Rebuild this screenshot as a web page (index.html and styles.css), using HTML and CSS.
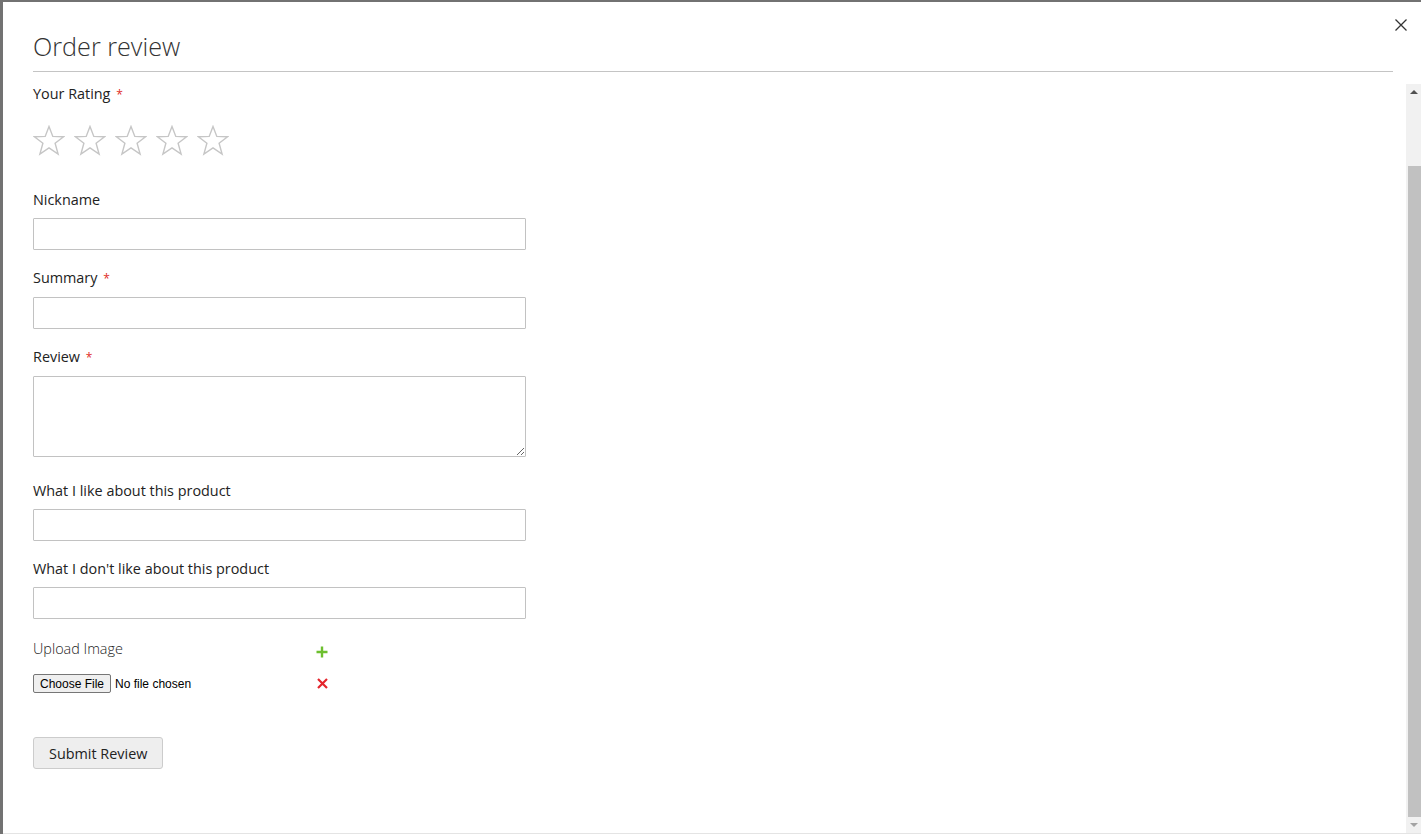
FILE: index.html
```html
<!DOCTYPE html>
<html lang="en">
<head>
    <meta charset="UTF-8">
    <meta name="viewport" content="width=device-width, initial-scale=1.0">
    <title>Order review</title>
    <link rel="stylesheet" href="styles.css">
</head>
<body>

    <div class="modal">

        <button class="close" type="button" aria-label="Close">
            <svg width="12" height="12" viewBox="0 0 12 12">
                <path d="M0.5 0.5 L11.5 11.5 M11.5 0.5 L0.5 11.5" stroke="#333" stroke-width="1.3" fill="none"/>
            </svg>
        </button>

        <div class="header">
            <h1>Order review</h1>
        </div>

        <div class="body">
            <form class="content">

                <div class="rating">
                    <label class="label">Your Rating <span class="req">*</span></label>
                    <div class="stars">
                        <svg class="star" width="32" height="31" viewBox="0 0 32 31"><polygon points="16,1.5 19.8,11.4 30.6,11.7 22.1,18.3 25.1,29 16,22.8 6.9,29 9.9,18.3 1.4,11.7 12.2,11.4"/></svg>
                        <svg class="star" width="32" height="31" viewBox="0 0 32 31"><polygon points="16,1.5 19.8,11.4 30.6,11.7 22.1,18.3 25.1,29 16,22.8 6.9,29 9.9,18.3 1.4,11.7 12.2,11.4"/></svg>
                        <svg class="star" width="32" height="31" viewBox="0 0 32 31"><polygon points="16,1.5 19.8,11.4 30.6,11.7 22.1,18.3 25.1,29 16,22.8 6.9,29 9.9,18.3 1.4,11.7 12.2,11.4"/></svg>
                        <svg class="star" width="32" height="31" viewBox="0 0 32 31"><polygon points="16,1.5 19.8,11.4 30.6,11.7 22.1,18.3 25.1,29 16,22.8 6.9,29 9.9,18.3 1.4,11.7 12.2,11.4"/></svg>
                        <svg class="star" width="32" height="31" viewBox="0 0 32 31"><polygon points="16,1.5 19.8,11.4 30.6,11.7 22.1,18.3 25.1,29 16,22.8 6.9,29 9.9,18.3 1.4,11.7 12.2,11.4"/></svg>
                    </div>
                </div>

                <div class="field">
                    <label class="label" for="nickname">Nickname</label>
                    <input class="inputfield" type="text" id="nickname">
                </div>

                <div class="field">
                    <label class="label" for="summary">Summary <span class="req">*</span></label>
                    <input class="inputfield" type="text" id="summary">
                </div>

                <div class="field field-review">
                    <label class="label" for="review">Review <span class="req">*</span></label>
                    <textarea class="inputfield textarea" id="review"></textarea>
                </div>

                <div class="field">
                    <label class="label" for="like">What I like about this product</label>
                    <input class="inputfield" type="text" id="like">
                </div>

                <div class="field">
                    <label class="label" for="dislike">What I don't like about this product</label>
                    <input class="inputfield" type="text" id="dislike">
                </div>

                <div class="upload">
                    <span class="upload-label">Upload Image</span>
                    <span class="icon-add">
                        <svg width="12" height="12" viewBox="0 0 12 12"><path d="M6 0.5 V11.5 M0.5 6 H11.5" stroke="#6dbf2f" stroke-width="2.4" fill="none"/></svg>
                    </span>
                    <input class="file" type="file">
                    <span class="icon-remove">
                        <svg width="11" height="11" viewBox="0 0 11 11"><path d="M1 1 L10 10 M10 1 L1 10" stroke="#e4252c" stroke-width="2.2" fill="none"/></svg>
                    </span>
                </div>

                <button class="submitbtn" type="button">Submit Review</button>
            </form>

            <div class="scrollbar">
                <div class="arrow arrow-up"></div>
                <div class="track">
                    <div class="thumb"></div>
                </div>
                <div class="arrow arrow-down"></div>
            </div>
        </div>

    </div>

</body>
</html>
```

FILE: styles.css
```css
* {
    box-sizing: border-box;
    margin: 0;
}

body {
    background-color: #727272;
    height: 834px;
    overflow: hidden;
    font-family: 'Open Sans', sans-serif;
    color: #333;
}

.modal {
    position: relative;
    margin: 2px 0 0 3px;
    height: 832px;
    background-color: #fff;
    display: flex;
    flex-direction: column;
    border-bottom: 1px solid #e4e4e4;
}

.close {
    position: absolute;
    top: 17px;
    right: 14px;
    width: 12px;
    height: 12px;
    padding: 0;
    border: none;
    background: none;
    display: flex;
}

.header {
    padding: 28px 28px 0 30px;
}

.header h1 {
    font-size: 25.2px;
    font-weight: 300;
    line-height: 32px;
    color: #333;
    padding-bottom: 9px;
    border-bottom: 1px solid #c4c4c4;
}

.body {
    flex: 1;
    display: flex;
    margin-top: 10px;
    min-height: 0;
}

.scrollbar {
    margin-top: 2px;
}

.content {
    flex: 1;
    padding-left: 30px;
    display: flex;
    flex-direction: column;
    align-items: flex-start;
}

.label {
    font-size: 14.4px;
    line-height: 18px;
    color: #222;
}

.req {
    color: #e02b27;
    font-size: 12px;
    margin-left: 2px;
}

.stars {
    display: flex;
    gap: 9px;
    margin-top: 21px;
    margin-bottom: 35px;
}

.star {
    fill: none;
    stroke: #c6c6c6;
    stroke-width: 1.4;
}

.field {
    display: flex;
    flex-direction: column;
    gap: 9px;
    margin-bottom: 19px;
}

.field-review {
    margin-bottom: 25px;
}

.inputfield {
    width: 493px;
    height: 32px;
    border: 1px solid #c2c2c2;
    border-radius: 1px;
    background: #fff;
    font-family: 'Open Sans', sans-serif;
    font-size: 14px;
    padding: 0 9px;
}

.textarea {
    display: block;
    height: 81px;
    resize: vertical;
    padding: 9px;
}

.upload {
    display: grid;
    grid-template-columns: 283px 12px;
    row-gap: 16px;
    align-items: center;
    margin-top: 2px;
}

.upload-label {
    font-size: 14.4px;
    line-height: 18px;
    color: #1a1a1a;
    font-weight: 300;
}

.icon-add,
.icon-remove {
    display: flex;
    justify-content: center;
}

.icon-add {
    padding-top: 5px;
}

.file {
    font-family: 'Liberation Sans', Arial, sans-serif;
    font-size: 12px;
    color: #000;
}

.file::file-selector-button {
    font-family: 'Liberation Sans', Arial, sans-serif;
    font-size: 12px;
    padding: 1px 6px;
    height: 19px;
    margin-right: 4px;
    background-color: #efefef;
    border: 1px solid #767676;
    border-radius: 2px;
    color: #000;
}

.submitbtn {
    margin-top: 44px;
    height: 32px;
    padding: 0 15px;
    font-family: 'Open Sans', sans-serif;
    font-size: 14.4px;
    color: #222;
    background-color: #eee;
    border: 1px solid #ccc;
    border-radius: 3px;
}

.scrollbar {
    width: 15px;
    background-color: #f1f1f1;
    display: flex;
    flex-direction: column;
}

.arrow {
    height: 16px;
    display: flex;
    align-items: center;
    justify-content: center;
}

.arrow-up::before {
    content: "";
    border-left: 4px solid transparent;
    border-right: 4px solid transparent;
    border-bottom: 4px solid #505050;
}

.arrow-down::before {
    content: "";
    border-left: 4px solid transparent;
    border-right: 4px solid transparent;
    border-top: 4px solid #a3a3a3;
}

.track {
    flex: 1;
    padding: 66px 0 0 2px;
    display: flex;
}

.thumb {
    flex: 1;
    background-color: #c1c1c1;
}
```
